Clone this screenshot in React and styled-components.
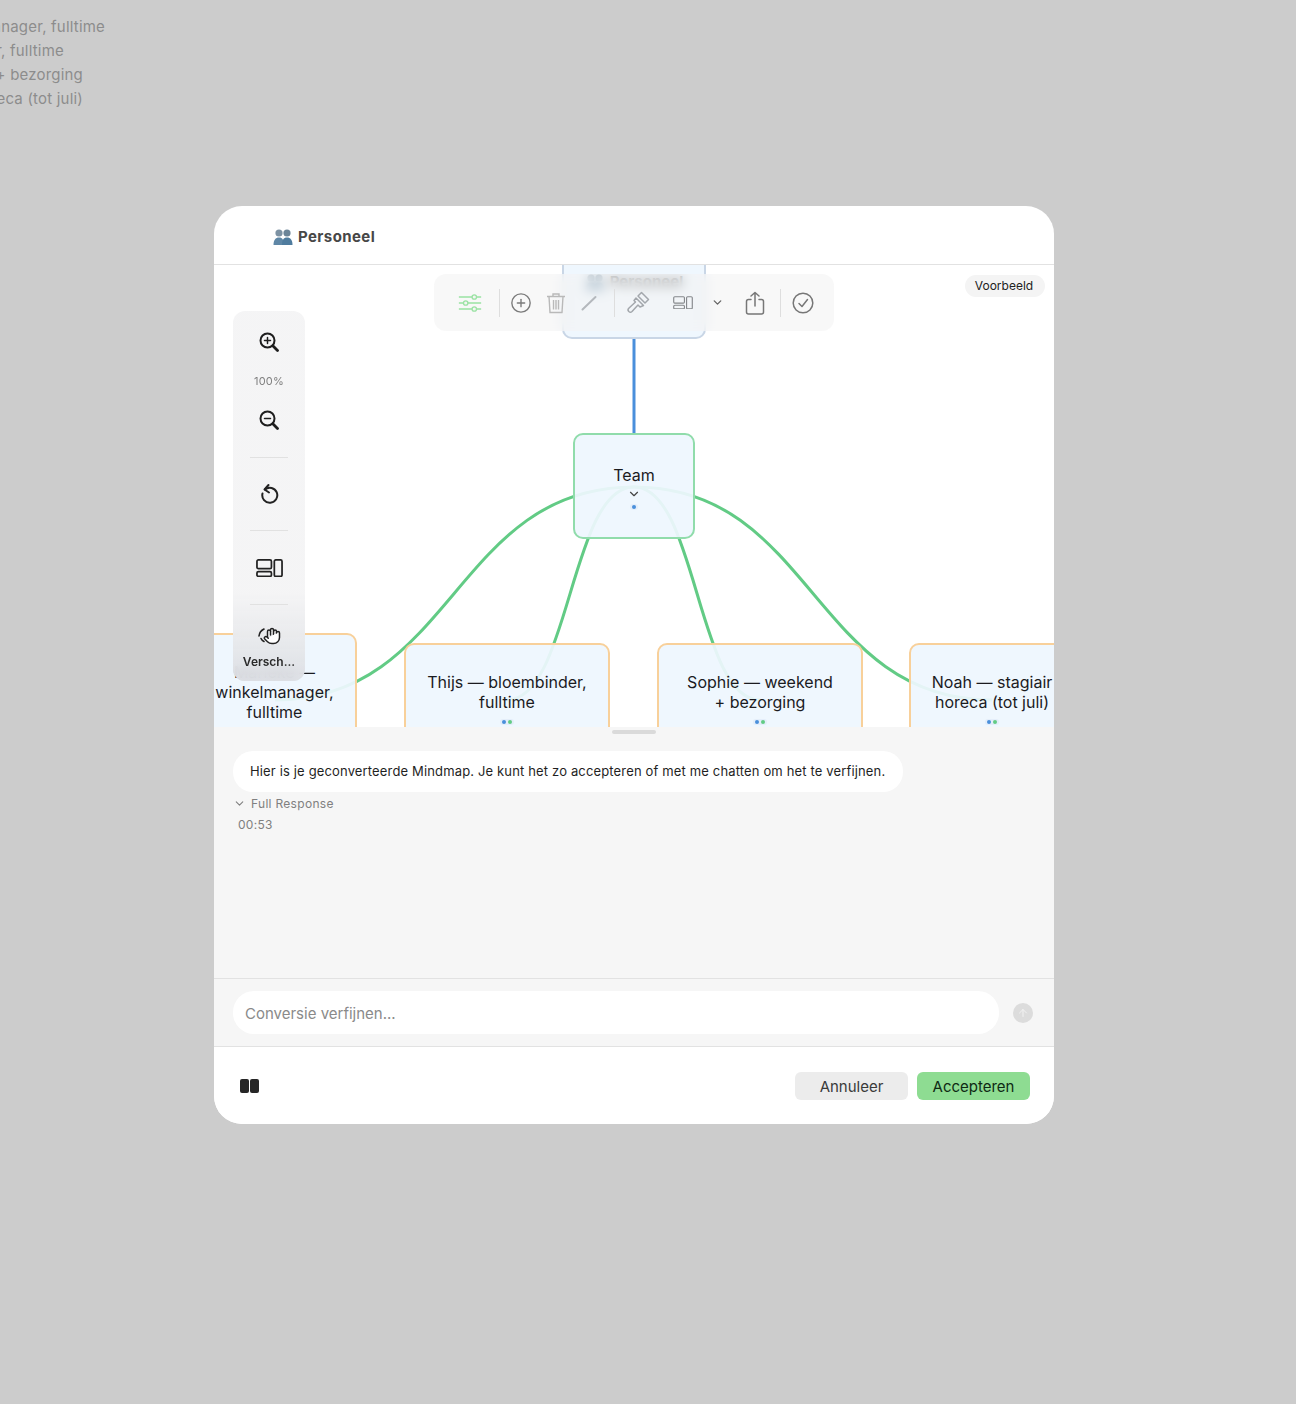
import React from 'react';
import styled, { createGlobalStyle } from 'styled-components';
import { ChevronDown, CirclePlus, Hand, ArrowUp } from 'lucide-react';

const GlobalStyle = createGlobalStyle`
  html, body {
    margin: 0;
    padding: 0;
    background: #cccccc;
    font-family: Inter, "Noto Sans", "Liberation Sans", sans-serif;
  }
`;

const Page = styled.div`
  min-height: 1404px;
  overflow: hidden;
  background: #cccccc;
`;

const BackList = styled.div`
  padding-top: 15px;
  font-size: 15px;
  line-height: 24px;
  letter-spacing: 0.2px;
  color: #8c8c8c;
`;

const BackLine = styled.div`
  display: flex;
  justify-content: flex-end;
  overflow: hidden;
  white-space: nowrap;
  width: ${({ $w }) => $w}px;
`;

const Modal = styled.div`
  width: 840px;
  height: 918px;
  margin: 95px 0 0 214px;
  display: flex;
  flex-direction: column;
  border-radius: 28px;
  overflow: hidden;
  background: #fff;
`;

const Header = styled.div`
  height: 59px;
  flex: none;
  display: flex;
  align-items: center;
  gap: 5px;
  padding: 3px 0 0 59px;
  box-sizing: border-box;
  border-bottom: 1px solid #e2e2e2;
  font-size: 15px;
  font-weight: 700;
  letter-spacing: 0.4px;
  color: #474747;
`;

const Canvas = styled.div`
  position: relative;
  height: 462px;
  flex: none;
  overflow: hidden;
  background: #fff;
`;

const Edges = styled.svg`
  position: absolute;
  left: 0;
  top: 0;
  width: 840px;
  height: 462px;
`;

const Node = styled.div`
  position: absolute;
  left: ${({ $x }) => $x}px;
  top: ${({ $y }) => $y}px;
  width: ${({ $w }) => $w}px;
  height: ${({ $h }) => $h}px;
  box-sizing: border-box;
  display: flex;
  flex-direction: column;
  align-items: center;
  justify-content: center;
  padding: ${({ $top }) => $top || 0}px 0 0;
  border: 2px solid ${({ $border }) => $border};
  border-radius: 10px;
  background: rgba(238, 246, 254, 0.93);
  font-size: 16px;
  line-height: 20px;
  text-align: center;
  color: #1b1b1f;
`;

const NodeLine = styled.span`
  display: block;
  white-space: nowrap;
`;

const RootTitle = styled.div`
  display: flex;
  align-items: center;
  gap: 5px;
  font-weight: 700;
  font-size: 15px;
  color: #333;
`;

const Dots = styled.div`
  display: flex;
  gap: 2px;
  margin-top: ${({ $gap }) => $gap || 7}px;
  padding: 1px 2px;
  border-radius: 4px;
  background: rgba(220, 232, 246, 0.6);
`;

const Dot = styled.span`
  width: 4px;
  height: 4px;
  border-radius: 50%;
  background: ${({ $color }) => $color};
`;

const NodeChevron = styled.div`
  display: flex;
  height: 12px;
  margin-top: 2px;
  color: #444;
`;

const TopBar = styled.div`
  position: absolute;
  left: 220px;
  top: 9px;
  width: 400px;
  height: 57px;
  box-sizing: border-box;
  padding-left: 24px;
  display: flex;
  align-items: center;
  border-radius: 12px;
  background: rgba(243, 243, 244, 0.6);
  backdrop-filter: blur(6px);
`;

const ToolSlot = styled.div`
  flex: none;
  width: 24px;
  display: flex;
  justify-content: center;
  margin-left: ${({ $gap }) => $gap || 0}px;
  color: ${({ $color }) => $color || '#7b7b7b'};
`;

const ToolDivider = styled.div`
  flex: none;
  width: 1px;
  height: 28px;
  margin-left: ${({ $gap }) => $gap}px;
  background: #dedede;
`;

const PreviewBadge = styled.div`
  position: absolute;
  right: 9px;
  top: 10px;
  height: 22px;
  width: 80px;
  box-sizing: border-box;
  padding: 0 2px 1px 0;
  display: flex;
  align-items: center;
  justify-content: center;
  border-radius: 11px;
  background: #f4f4f4;
  font-size: 12px;
  color: #222;
`;

const SideBar = styled.div`
  position: absolute;
  left: 19px;
  top: 46px;
  width: 72px;
  height: 370px;
  box-sizing: border-box;
  padding-top: 19px;
  display: flex;
  flex-direction: column;
  align-items: center;
  border-radius: 12px;
  background: linear-gradient(
    to bottom,
    rgba(244, 244, 245, 0.95) 0%,
    rgba(244, 244, 245, 0.95) 76%,
    rgba(220, 222, 227, 0.92) 100%
  );
  backdrop-filter: blur(5px);
  color: #222;
`;

const SideIcon = styled.div`
  height: 24px;
  display: flex;
  align-items: center;
  justify-content: center;
  margin-top: ${({ $gap }) => $gap || 0}px;
`;

const ZoomLabel = styled.div`
  margin-top: 20px;
  font-size: 11px;
  line-height: 14px;
  letter-spacing: 0.2px;
  color: #808080;
`;

const SideDivider = styled.div`
  width: 38px;
  height: 1px;
  margin-top: ${({ $gap }) => $gap}px;
  background: #e1e1e1;
`;

const SideLabel = styled.div`
  margin-top: 8px;
  font-size: 12px;
  line-height: 14px;
  font-weight: 600;
  color: #2b2b2b;
`;

const ChatPane = styled.div`
  position: relative;
  flex: 1;
  box-sizing: border-box;
  padding: 24px 19px 0;
  background: #f6f6f6;
`;

const Grabber = styled.div`
  position: absolute;
  left: 398px;
  top: 3px;
  width: 44px;
  height: 4px;
  border-radius: 2px;
  background: #dadada;
`;

const Bubble = styled.div`
  width: 670px;
  height: 41px;
  box-sizing: border-box;
  padding: 0 0 1px 17px;
  display: flex;
  align-items: center;
  border-radius: 20px;
  background: #fff;
  font-size: 13px;
  letter-spacing: 0.15px;
  white-space: nowrap;
  color: #1f1f1f;
`;

const Disclosure = styled.div`
  display: flex;
  align-items: center;
  gap: 5px;
  margin-top: 4px;
  height: 15px;
  font-size: 12px;
  letter-spacing: 0.3px;
  color: #808080;
`;

const Elapsed = styled.div`
  margin: 6px 0 0 5px;
  font-size: 12px;
  line-height: 15px;
  letter-spacing: 0.3px;
  color: #808080;
`;

const InputBar = styled.div`
  height: 69px;
  flex: none;
  box-sizing: border-box;
  display: flex;
  align-items: center;
  gap: 14px;
  padding: 0 21px 0 19px;
  border-top: 1px solid #e2e2e2;
  border-bottom: 1px solid #e2e2e2;
  background: #f6f6f6;
`;

const InputField = styled.div`
  flex: 1;
  height: 43px;
  box-sizing: border-box;
  padding: 1px 0 0 12px;
  display: flex;
  align-items: center;
  border-radius: 21px;
  background: #fff;
  font-size: 15px;
  color: #8a8a8a;
`;

const SendButton = styled.div`
  width: 20px;
  height: 20px;
  border-radius: 50%;
  display: flex;
  align-items: center;
  justify-content: center;
  background: #dcdcdc;
  color: #f2f2f2;
`;

const Footer = styled.div`
  height: 77px;
  flex: none;
  display: flex;
  align-items: center;
  padding: 0 24px 0 26px;
  background: #fff;
`;

const PanelToggle = styled.div`
  display: flex;
  gap: 1px;
  margin-right: auto;
`;

const PanelHalf = styled.span`
  width: 9px;
  height: 14px;
  border-radius: 2px;
  background: #262626;
`;

const FooterButton = styled.div`
  width: 113px;
  height: 28px;
  box-sizing: border-box;
  padding-top: 1px;
  margin-left: ${({ $gap }) => $gap || 0}px;
  display: flex;
  align-items: center;
  justify-content: center;
  border-radius: 6px;
  background: ${({ $primary }) => ($primary ? '#8edc92' : '#ececec')};
  font-size: 15px;
  color: ${({ $primary }) => ($primary ? '#0f2a14' : '#3a3a3a')};
`;

const GREEN = '#62cb85';
const BLUE = '#4a8fdb';
const ORANGE = '#f8d09a';
const TEAL = '#90dcab';

const PeopleIcon = () => (
  <svg width="20" height="18" viewBox="0 0 20 18">
    <circle cx="6" cy="5" r="3.6" fill="#7d92a3" />
    <circle cx="14" cy="5" r="3.6" fill="#6c8598" />
    <path d="M0.5 17c0-5 2-7.5 5.5-7.5S11 12 11 17z" fill="#5f87a6" />
    <path d="M9 17c0-5 1.500-7.500 5-7.500s5.500 2.500 5.500 7.500z" fill="#4f7c9e" />
  </svg>
);

const SlidersIcon = () => (
  <svg width="28" height="24" viewBox="0 0 28 24" fill="none" stroke="#9be3a4" strokeWidth="1.500">
    <path d="M1 5h26M1 12h26M1 19h26" />
    <circle cx="19" cy="5" r="2.600" fill="#f4f5f4" />
    <circle cx="9" cy="12" r="2.600" fill="#f4f5f4" />
    <circle cx="19" cy="19" r="2.600" fill="#f4f5f4" />
  </svg>
);

const TrashIcon = () => (
  <svg width="20" height="22" viewBox="0 0 20 22" fill="none" stroke="#b9b9b9" strokeWidth="1.400">
    <path d="M1 4.500h18M7 4.500V2h6v2.500M3 4.500l1 16h12l1-16M7.500 8v9.500M10 8v9.500M12.500 8v9.500" />
  </svg>
);

const LineIcon = () => (
  <svg width="16" height="16" viewBox="0 0 16 16" fill="none" stroke="#b4b8bd" strokeWidth="2" strokeLinecap="round">
    <path d="M1.500 14.500L14.500 2" />
  </svg>
);

const BrushIcon = () => (
  <svg width="24" height="24" viewBox="0 0 24 24" fill="none" stroke="#a3a7ac" strokeWidth="1.500" strokeLinejoin="round">
    <path d="M12 5l3.500-3.500 7 7L19 12z" />
    <path d="M10 7l7.500 7.500-3.500 1.500-2-2-6 6.500a2.200 2.200 0 0 1-3.200-3.200L9.500 11 8 9.500z" />
  </svg>
);

const LayoutIcon = ({ size = 24, width = 1.500 }) => (
  <svg width={size} height={size * 0.68} viewBox="0 0 28 19" fill="none" stroke="currentColor" strokeWidth={width}>
    <rect x="1" y="1" width="15" height="9" rx="1.500" />
    <rect x="1" y="13" width="15" height="5" rx="1.500" />
    <rect x="19" y="1" width="8" height="17" rx="1.500" />
  </svg>
);

const ShareIcon = () => (
  <svg width="20" height="24" viewBox="0 0 20 24" fill="none" stroke="#777" strokeWidth="1.500" strokeLinecap="round" strokeLinejoin="round">
    <path d="M6 8.500H3.500a2 2 0 0 0-2 2V21a2 2 0 0 0 2 2h13a2 2 0 0 0 2-2V10.500a2 2 0 0 0-2-2H14" />
    <path d="M10 15V1.500M6 5l4-3.500L14 5" />
  </svg>
);

const CheckCircleIcon = () => (
  <svg width="22" height="22" viewBox="0 0 22 22" fill="none" stroke="#777" strokeWidth="1.500" strokeLinecap="round" strokeLinejoin="round">
    <circle cx="11" cy="11" r="9.800" />
    <path d="M7 11.500l3 3 5.500-7" />
  </svg>
);

const ZoomIcon = ({ plus }) => (
  <svg width="20" height="20" viewBox="0 0 20 20" fill="none" stroke="#1e1e1e" strokeLinecap="round">
    <circle cx="8.500" cy="8.500" r="7" strokeWidth="2" />
    <path d={plus ? 'M5.500 8.500h6M8.500 5.500v6' : 'M5.500 8.500h6'} strokeWidth="1.500" />
    <path d="M13.800 13.800L18.500 18.500" strokeWidth="2.800" />
  </svg>
);

const UndoIcon = () => (
  <svg width="20" height="22" viewBox="0 0 20 22" fill="none" stroke="#222" strokeWidth="2" strokeLinecap="round" strokeLinejoin="round">
    <path d="M6 6.500a7.500 7.500 0 1 1-2.500 4" />
    <path d="M9.500 2L5.500 6.500l4.500 3" />
  </svg>
);

const GrabIcon = () => (
  <svg width="24" height="24" viewBox="0 0 24 24" fill="none" stroke="#222" strokeWidth="1.600" strokeLinecap="round">
    <path d="M2 13a9 9 0 0 1 5-7" />
    <path d="M4 15.500a6 6 0 0 0 3 3" />
    <g transform="translate(6 4) scale(0.75)">
      <Hand size={24} fill="#fff" />
    </g>
  </svg>
);

const Team = [
  { key: 'a', x: -22, y: 368, w: 165, h: 130, lines: ['Marieke —', 'winkelmanager,', 'fulltime'] },
  { key: 'b', x: 190, y: 378, w: 206, h: 110, lines: ['Thijs — bloembinder,', 'fulltime'] },
  { key: 'c', x: 443, y: 378, w: 206, h: 110, lines: ['Sophie — weekend', '+ bezorging'] },
  { key: 'd', x: 695, y: 378, w: 166, h: 110, lines: ['Noah — stagiair', 'horeca (tot juli)'] },
];

const App = () => (
  <Page>
    <GlobalStyle />
    <BackList>
      <BackLine $w={105}>Marieke — winkelmanager, fulltime</BackLine>
      <BackLine $w={64}>Thijs — bloembinder, fulltime</BackLine>
      <BackLine $w={83}>Sophie — weekend + bezorging</BackLine>
      <BackLine $w={83}>Noah — stagiair horeca (tot juli)</BackLine>
    </BackList>
    <Modal>
      <Header>
        <PeopleIcon />
        Personeel
      </Header>
      <Canvas>
        <Edges viewBox="214 265 840 462" fill="none">
          <path d="M634 339V434" stroke={BLUE} strokeWidth="3" />
          <path d="M634 487C454 487 454 700 275 700" stroke={GREEN} strokeWidth="3" />
          <path d="M634 487C570 487 570 700 507 700" stroke={GREEN} strokeWidth="3" />
          <path d="M634 487C697 487 697 700 760 700" stroke={GREEN} strokeWidth="3" />
          <path d="M634 487C813 487 813 700 992 700" stroke={GREEN} strokeWidth="3" />
        </Edges>
        <Node $x={348} $y={-40} $w={144} $h={114} $border="#c9d6e6">
          <RootTitle>
            <PeopleIcon />
            Personeel
          </RootTitle>
        </Node>
        <Node $x={359} $y={168} $w={122} $h={106} $border={TEAL} $top={2}>
          Team
          <NodeChevron>
            <ChevronDown size={14} strokeWidth={2} />
          </NodeChevron>
          <Dots $gap={5}>
            <Dot $color={BLUE} />
          </Dots>
        </Node>
        {Team.map((person) => (
          <Node key={person.key} $x={person.x} $y={person.y} $w={person.w} $h={person.h} $border={ORANGE}>
            {person.lines.map((line) => (
              <NodeLine key={line}>{line}</NodeLine>
            ))}
            <Dots>
              <Dot $color={BLUE} />
              <Dot $color={GREEN} />
            </Dots>
          </Node>
        ))}
        <TopBar>
          <ToolSlot><SlidersIcon /></ToolSlot>
          <ToolDivider $gap={17} />
          <ToolSlot $gap={9}><CirclePlus size={22} strokeWidth={1.5} /></ToolSlot>
          <ToolSlot $gap={11}><TrashIcon /></ToolSlot>
          <ToolSlot $gap={9}><LineIcon /></ToolSlot>
          <ToolDivider $gap={13} />
          <ToolSlot $gap={11}><BrushIcon /></ToolSlot>
          <ToolSlot $gap={21} $color="#85888c"><LayoutIcon size={20} width={1.6} /></ToolSlot>
          <ToolSlot $gap={10} $color="#666"><ChevronDown size={13} strokeWidth={2.5} /></ToolSlot>
          <ToolSlot $gap={14}><ShareIcon /></ToolSlot>
          <ToolDivider $gap={13} />
          <ToolSlot $gap={10}><CheckCircleIcon /></ToolSlot>
        </TopBar>
        <PreviewBadge>Voorbeeld</PreviewBadge>
        <SideBar>
          <SideIcon><ZoomIcon plus /></SideIcon>
          <ZoomLabel>100%</ZoomLabel>
          <SideIcon $gap={20}><ZoomIcon /></SideIcon>
          <SideDivider $gap={25} />
          <SideIcon $gap={24}><UndoIcon /></SideIcon>
          <SideDivider $gap={24} />
          <SideIcon $gap={25}><LayoutIcon size={27} width={1.8} /></SideIcon>
          <SideDivider $gap={24} />
          <SideIcon $gap={18}><GrabIcon /></SideIcon>
          <SideLabel>Versch...</SideLabel>
        </SideBar>
      </Canvas>
      <ChatPane>
        <Grabber />
        <Bubble>Hier is je geconverteerde Mindmap. Je kunt het zo accepteren of met me chatten om het te verfijnen.</Bubble>
        <Disclosure>
          <ChevronDown size={13} strokeWidth={2} />
          Full Response
        </Disclosure>
        <Elapsed>00:53</Elapsed>
      </ChatPane>
      <InputBar>
        <InputField>Conversie verfijnen...</InputField>
        <SendButton><ArrowUp size={12} strokeWidth={2} /></SendButton>
      </InputBar>
      <Footer>
        <PanelToggle>
          <PanelHalf />
          <PanelHalf />
        </PanelToggle>
        <FooterButton>Annuleer</FooterButton>
        <FooterButton $primary $gap={9}>Accepteren</FooterButton>
      </Footer>
    </Modal>
  </Page>
);

export default App;
